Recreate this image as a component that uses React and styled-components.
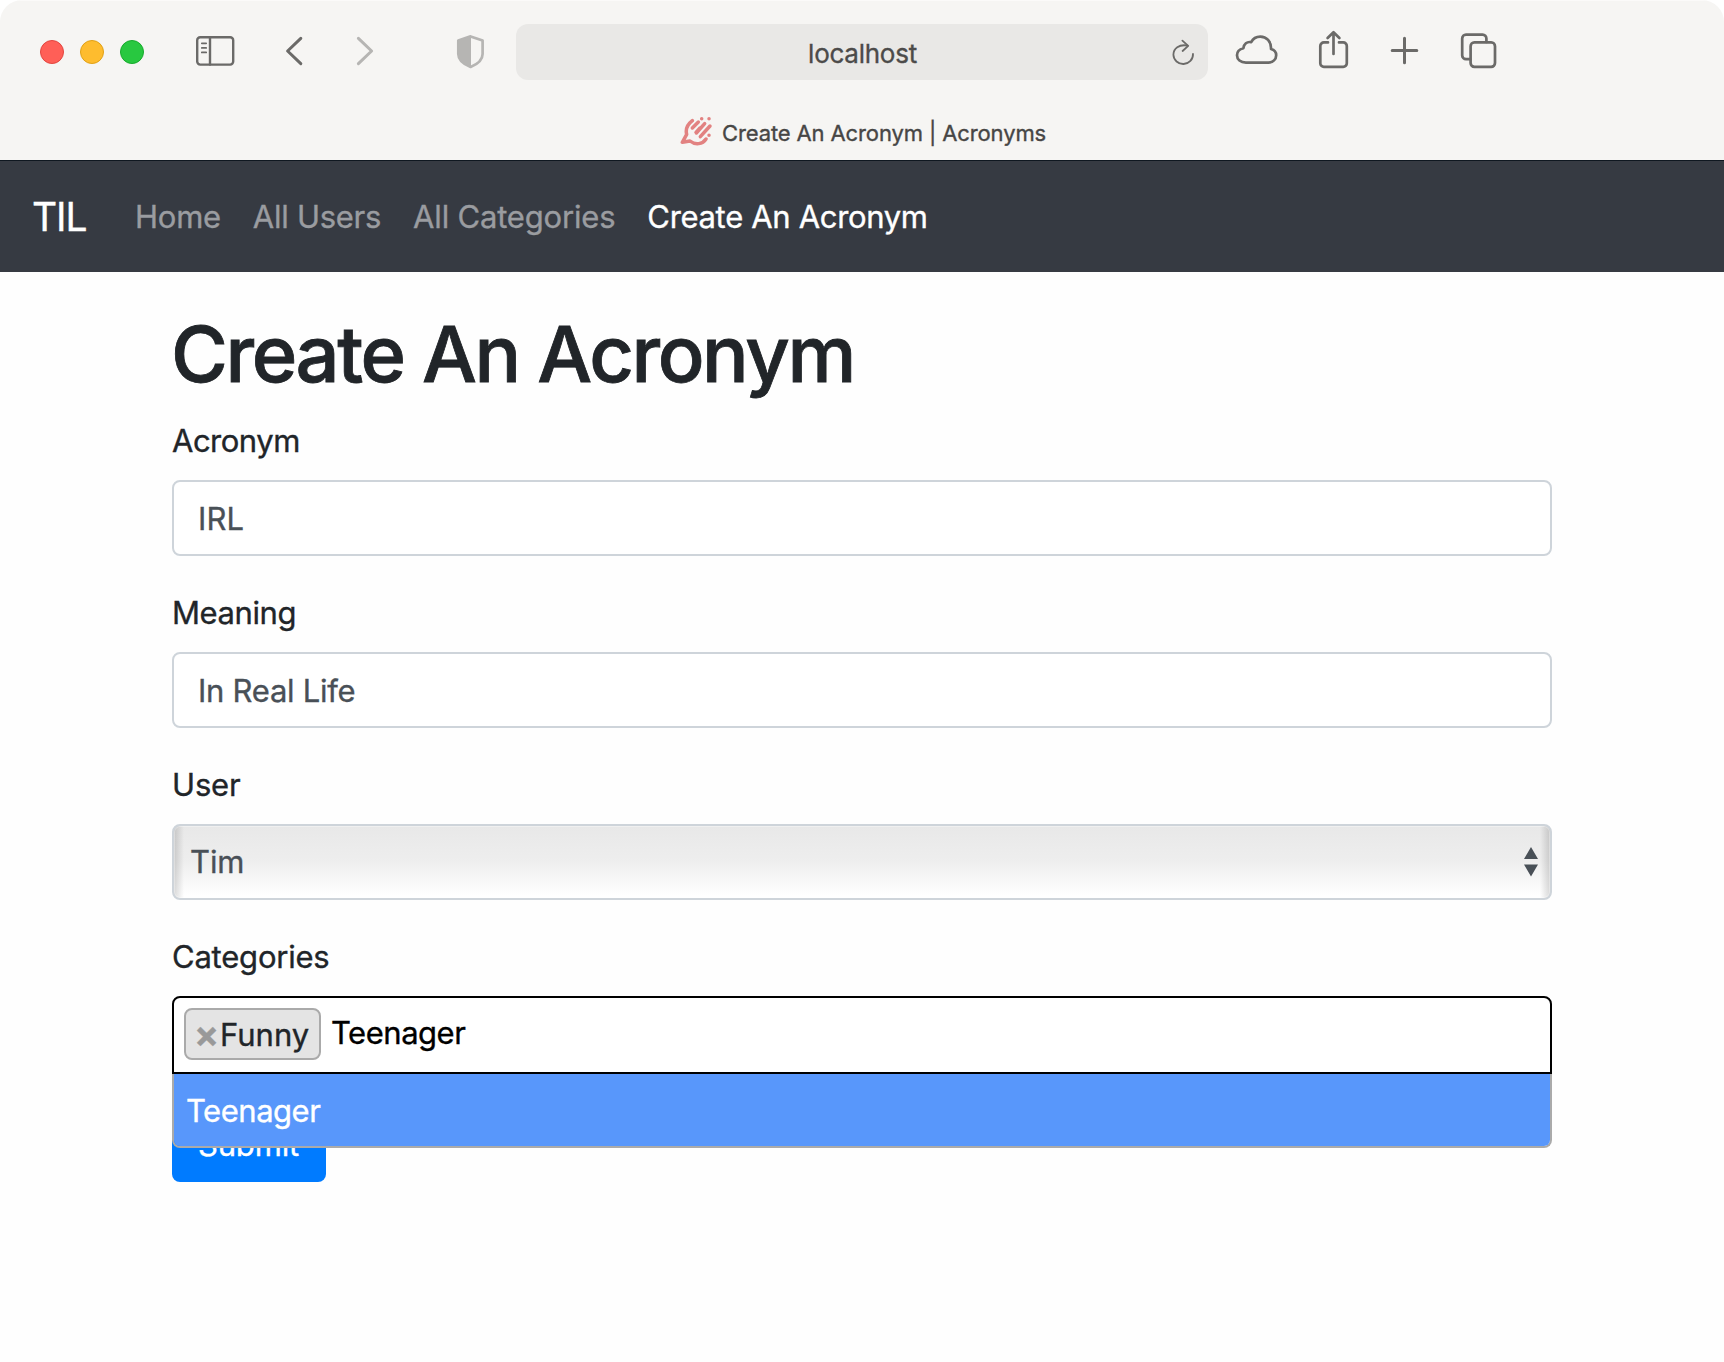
import React from "react";
import styled, { createGlobalStyle } from "styled-components";

const GlobalStyle = createGlobalStyle`
  *, *::before, *::after { box-sizing: border-box; }
  html { background: #fff; }
  body {
    margin: 0;
    font-family: Inter, "Liberation Sans", sans-serif;
    font-size: 31px;
    font-weight: 400;
    line-height: 48px;
    color: #212529;
    -webkit-text-stroke: 0.35px currentColor;
  }
`;

const Window = styled.div`
  width: 1724px;
  height: 1362px;
  overflow: hidden;
  display: flex;
  flex-direction: column;
  background: #fefefe;
  border-radius: 22px 22px 0 0;
`;

/* Browser chrome */

const Chrome = styled.header`
  height: 160px;
  background: #f6f5f3;
  box-shadow: inset 0 1px #fbfaf9;
  display: flex;
  flex-direction: column;
`;

const Toolbar = styled.div`
  height: 104px;
  padding-left: 40px;
  display: flex;
  align-items: center;
`;

const Lights = styled.div`
  display: flex;
  gap: 16px;
`;

const Light = styled.span`
  width: 24px;
  height: 24px;
  border-radius: 50%;
  background: ${(p) => p.$fill};
  border: 1px solid ${(p) => p.$edge};
`;

const Glyph = styled.svg`
  flex: none;
  display: block;
  height: 44px;
  width: ${(p) => p.$w}px;
  margin-left: ${(p) => p.$ml || 0}px;
  color: ${(p) => (p.$dim ? "#b6b5b3" : "#6b6a68")};
  fill: none;
  stroke: currentColor;
  stroke-width: ${(p) => p.$stroke || 2.7};
  stroke-linecap: round;
  stroke-linejoin: round;
`;

const AddressBar = styled.div`
  width: 692px;
  height: 56px;
  margin-left: 31px;
  padding-right: 13px;
  border-radius: 12px;
  background: #e9e8e6;
  display: flex;
  align-items: center;
`;

const Address = styled.span`
  flex: 1;
  padding: 3px 0 0 38px;
  text-align: center;
  font-size: 26px;
  line-height: 32px;
  letter-spacing: -0.25px;
  color: #4c4b4a;
`;

const TabStrip = styled.div`
  height: 56px;
  padding: 0 0 2px 680px;
  display: flex;
  align-items: center;
`;

const TabTitle = styled.span`
  margin-left: 9px;
  padding-top: 3px;
  font-size: 22px;
  line-height: 28px;
  letter-spacing: -0.12px;
  color: #474645;
  white-space: nowrap;
`;

/* Page */

const Navbar = styled.nav`
  height: 112px;
  padding: 16px 32px;
  border-top: 1px solid #0f1720;
  background: #363a42;
  display: flex;
  align-items: center;
`;

const Brand = styled.span`
  width: 55px;
  margin-right: 32px;
  padding-bottom: 1px;
  font-size: 39px;
  line-height: 59px;
  letter-spacing: -1.1px;
  color: #fff;
`;

const NavLink = styled.span`
  padding: 1px 16px 0;
  white-space: nowrap;
  letter-spacing: ${(p) => p.$track}px;
  color: ${(p) => (p.$active ? "#fff" : "#9a9ca0")};
`;

const Container = styled.main`
  width: 1380px;
  margin: 32px auto 0;
  display: flex;
  flex-direction: column;
`;

const Title = styled.h1`
  height: 96px;
  margin: 0 0 16px -1px;
  padding-top: 3px;
  font-size: 77.6px;
  font-weight: 500;
  line-height: 95px;
  letter-spacing: -2.4px;
  white-space: nowrap;
  -webkit-text-stroke-width: 0.8px;
`;

const Field = styled.div`
  margin-bottom: 32px;
  display: flex;
  flex-direction: column;
  gap: 16px;
`;

const Label = styled.label`
  height: 48px;
  padding-top: 1px;
  letter-spacing: ${(p) => p.$track}px;
`;

const Control = styled.div`
  height: 76px;
  padding: 13px 24px 11px;
  border: 2px solid #ced4da;
  border-radius: 8px;
  background: #fff;
  color: #495057;
  letter-spacing: ${(p) => p.$track || 0}px;
`;

const Select = styled(Control)`
  padding: 12px 12px 12px 16px;
  display: flex;
  justify-content: space-between;
  align-items: center;
  background:
    linear-gradient(to right, rgba(0, 0, 0, 0.15), transparent 10px),
    linear-gradient(to left, rgba(0, 0, 0, 0.15), transparent 10px),
    linear-gradient(#e8e8e8, #eeeeee 50%, #fff 96%);
  box-shadow: inset 0 0 0 1px rgba(255, 255, 255, 0.35);
`;

const Combo = styled.div`
  position: relative;
`;

const ComboBox = styled.div`
  height: 78px;
  padding: 10px;
  border: 2px solid #000;
  border-radius: 8px 8px 0 0;
  background: #fff;
  display: flex;
  align-items: flex-start;
`;

const Tag = styled.span`
  width: 137px;
  height: 52px;
  padding: 1px 9px 0 8px;
  border: 2px solid #aaa;
  border-radius: 8px;
  background: #e4e4e4;
  display: flex;
  line-height: 48px;
`;

const Remove = styled.span`
  width: 26px;
  margin-top: -1px;
  padding-right: 1px;
  text-align: center;
  font-size: 37px;
  font-weight: 700;
  color: #999;
`;

const Query = styled.span`
  margin-left: 10px;
  margin-top: 1px;
  color: #000;
  letter-spacing: -0.48px;
`;

const Dropdown = styled.div`
  position: absolute;
  z-index: 2;
  top: 78px;
  left: 0;
  right: 0;
  height: 74px;
  overflow: hidden;
  border: 2px solid #aaa;
  border-top: 0;
  border-radius: 0 0 8px 8px;
  background: #fff;
`;

const Option = styled.div`
  height: 72px;
  padding: 13px 12px 11px;
  background: #5897fb;
  color: #fff;
  letter-spacing: -0.48px;
`;

const Submit = styled.button`
  align-self: flex-start;
  width: 154px;
  height: 76px;
  padding: 1px 1px 0 0;
  border: 0;
  border-radius: 8px;
  background: #007bff;
  color: #fff;
  font: inherit;
  letter-spacing: -0.15px;
`;

const SidebarIcon = () => (
  <Glyph $w={42} $ml={50} $stroke={2.4} viewBox="194 30 42 44">
    <rect x="197.2" y="37.2" width="36" height="27.4" rx="3" />
    <path d="M210 37.5V64.5" />
    <path d="M201.8 43.3h4.4M201.8 47.9h4.4M201.8 52.4h4.4" strokeWidth="1.7" />
  </Glyph>
);

const BackIcon = () => (
  <Glyph $w={20} $ml={48} $stroke={3} viewBox="284 30 20 44">
    <path d="M300.8 38.4 287.6 51l13.2 12.6" />
  </Glyph>
);

const ForwardIcon = () => (
  <Glyph $w={20} $ml={51} $stroke={3} $dim viewBox="355 30 20 44">
    <path d="M358.4 38.4 371.6 51l-13.2 12.6" />
  </Glyph>
);

const ShieldIcon = () => (
  <Glyph $w={30} $ml={80} $dim viewBox="455 30 30 44">
    <path d="M470.6 36.4 482.6 40.6V54C482.6 61 477 64.4 470.6 67 464 64.4 458.3 61 458.3 54V40.6Z" />
    <path
      fill="currentColor"
      stroke="none"
      d="M471 36V67C464 64.4 458.3 61 458.3 54V40.6Z"
    />
  </Glyph>
);

const ReloadIcon = () => (
  <Glyph $w={24} $stroke={1.8} viewBox="1171 30 24 44">
    <path d="M1187.5 45.6C1179 44 1173.4 48.6 1173.4 54.8A9.8 9.6 0 0 0 1193 54" />
    <path d="M1182.4 40.6 1188.2 45.8 1182.6 51" />
  </Glyph>
);

const CloudIcon = () => (
  <Glyph $w={46} $ml={26} viewBox="1234 30 46 44">
    <path d="M1246 62.6H1268.4C1273 62.6 1276.2 59.2 1276.2 55.2 1276.2 52.4 1274.2 49.9 1271 49 1271.4 41.4 1266.4 36.6 1260.3 36.6 1256 36.6 1252.9 38.8 1251.2 42.2 1247 41.2 1243.8 44 1243.4 48.2 1239.6 49.1 1237 51.8 1237 55.3 1237 59.4 1240.5 62.6 1246 62.6Z" />
  </Glyph>
);

const ShareIcon = () => (
  <Glyph $w={34} $ml={37} viewBox="1317 30 34 44">
    <path d="M1328 42.4H1324A3.6 3.6 0 0 0 1320.3 46V63.2A3.6 3.6 0 0 0 1324 66.8H1343.2A3.6 3.6 0 0 0 1346.8 63.2V46A3.6 3.6 0 0 0 1343.2 42.4H1339" />
    <path d="M1333.5 54V32.6M1327.6 38 1333.5 32.2 1339.4 38" />
  </Glyph>
);

const PlusIcon = () => (
  <Glyph $w={32} $ml={38} $stroke={3} viewBox="1389 30 32 44">
    <path d="M1392.2 50.5H1416.8M1404.5 38.2V62.8" />
  </Glyph>
);

const TabsIcon = () => (
  <Glyph $w={40} $ml={38} viewBox="1459 30 40 44">
    <rect x="1470.6" y="42.4" width="24.4" height="24.4" rx="3.8" />
    <path d="M1470 59.2H1466A3.8 3.8 0 0 1 1462.2 55.4V38.4A3.8 3.8 0 0 1 1466 34.6H1482.6A3.8 3.8 0 0 1 1486.4 38.4V42" />
  </Glyph>
);

const Favicon = styled.svg`
  flex: none;
  width: 33px;
  height: 32px;
  fill: none;
  stroke: #e28281;
  stroke-width: 10.5;
  stroke-linecap: round;
  stroke-linejoin: round;
`;

const SiteIcon = () => (
  <Favicon viewBox="60 50 99 96">
    <path d="M97 67C84 77 76 92 80 108L67 132 90 128C106 141 128 138 138 122" />
    <path d="M97 89 115 71M108 102 120 89M109 104 134 76M121 115 150 83" />
    <path d="M125 61h.1M147 61h.1M147 111h.1" />
  </Favicon>
);

const Arrows = styled.svg`
  width: 14px;
  height: 30px;
  fill: #495057;
`;

export default function App() {
  return (
    <>
      <GlobalStyle />
      <Window>
        <Chrome>
          <Toolbar>
            <Lights>
              <Light $fill="#ff5f57" $edge="#e2463f" />
              <Light $fill="#febc2e" $edge="#e1a116" />
              <Light $fill="#28c840" $edge="#17ab2c" />
            </Lights>
            <SidebarIcon />
            <BackIcon />
            <ForwardIcon />
            <ShieldIcon />
            <AddressBar>
              <Address>localhost</Address>
              <ReloadIcon />
            </AddressBar>
            <CloudIcon />
            <ShareIcon />
            <PlusIcon />
            <TabsIcon />
          </Toolbar>
          <TabStrip>
            <SiteIcon />
            <TabTitle>Create An Acronym | Acronyms</TabTitle>
          </TabStrip>
        </Chrome>

        <Navbar>
          <Brand>TIL</Brand>
          <NavLink $track={-0.25}>Home</NavLink>
          <NavLink $track={-0.27}>All Users</NavLink>
          <NavLink $track={-0.18}>All Categories</NavLink>
          <NavLink $track={-0.33} $active>Create An Acronym</NavLink>
        </Navbar>

        <Container>
          <Title>Create An Acronym</Title>
          <Field>
            <Label $track={-0.5}>Acronym</Label>
            <Control $track={0.1}>IRL</Control>
          </Field>
          <Field>
            <Label $track={-0.4}>Meaning</Label>
            <Control $track={-0.27}>In Real Life</Control>
          </Field>
          <Field>
            <Label $track={-0.18}>User</Label>
            <Select $track={-0.1}>
              Tim
              <Arrows viewBox="0 0 14 30">
                <path d="M7 0 14 12H0ZM0 17.6H14L7 29.4Z" />
              </Arrows>
            </Select>
          </Field>
          <Field>
            <Label $track={-0.22}>Categories</Label>
            <Combo>
              <ComboBox>
                <Tag>
                  <Remove>×</Remove>
                  Funny
                </Tag>
                <Query>Teenager</Query>
              </ComboBox>
              <Dropdown>
                <Option>Teenager</Option>
              </Dropdown>
            </Combo>
          </Field>
          <Submit>Submit</Submit>
        </Container>
      </Window>
    </>
  );
}
